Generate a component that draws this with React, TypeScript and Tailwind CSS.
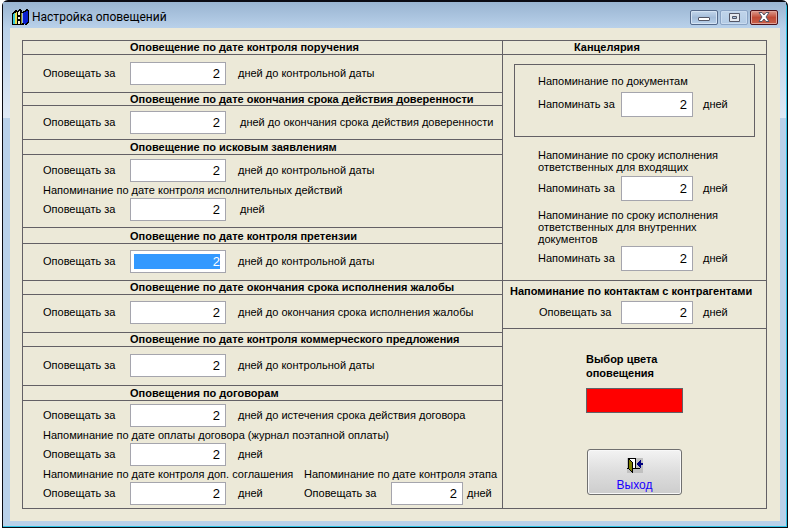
import React, { useState } from 'react';
import { clsx } from 'clsx';

interface DaysFieldProps {
  id: string;
  label: string;
  suffix: string;
  size?: 'wide' | 'small' | 'tall';
  selected?: boolean;
  labelClass?: string;
  suffixClass?: string;
}

function DaysField({
  id,
  label,
  suffix,
  size = 'wide',
  selected = false,
  labelClass = 'w-[87px]',
  suffixClass = 'ml-3'
}: DaysFieldProps) {
  const [value, setValue] = useState('2');

  return (
    <div className="flex items-center">
      <label htmlFor={id} className={clsx('shrink-0 whitespace-nowrap pb-px', labelClass)}>
        {label}
      </label>
      <span
        className={clsx(
          'flex shrink-0 border border-[#a5a5ad] bg-white py-[3px] pl-[3px] pr-[5px]',
          size === 'wide' && 'h-[23px] w-24',
          size === 'small' && 'h-[23px] w-[72px]',
          size === 'tall' && 'h-[25px] w-[72px]'
        )}
      >
        <input
          id={id}
          type="text"
          value={value}
          onChange={(e) => setValue(e.target.value)}
          className={clsx(
            'w-full min-w-0 text-right text-[13px] leading-4 outline-none',
            selected ? 'bg-[#3399ff] text-white' : 'bg-white text-black'
          )}
        />
      </span>
      <span className={clsx('whitespace-nowrap pb-px', suffixClass)}>{suffix}</span>
    </div>
  );
}

interface SectionProps {
  title: string;
  headClass: string;
  bodyClass: string;
  last?: boolean;
  children: React.ReactNode;
}

function Section({ title, headClass, bodyClass, last = false, children }: SectionProps) {
  return (
    <section>
      <h2 className={clsx('border-b border-[#636065] pl-[107px] leading-3 font-bold whitespace-nowrap', headClass)}>
        {title}
      </h2>
      <div className={clsx('pl-5', !last && 'border-b border-[#636065]', bodyClass)}>{children}</div>
    </section>
  );
}

function BooksIcon() {
  return (
    <svg width="17" height="17" viewBox="0 0 17 17" shapeRendering="crispEdges" aria-hidden="true">
      <path d="M0 4h1V3h1V2h1V1h2v1h1V1h1V0h2v1h1v2h1V2h2V1h1V0h2v1h1v13h-1v1h-1v1h-2v-1h-1v1H0z" fill="#000" />
      <path d="M1 5h1V4h1v11H1z" fill="#35c8d8" />
      <path d="M3 4h1V3h1v12H3z" fill="#e8e04a" />
      <path d="M6 3h1V2h1v4H6zM6 8h2v2H6zM6 12h2v3H6z" fill="#f2f2e0" />
      <path d="M9 4h1v11H9z" fill="#8a8a20" />
      <path d="M10 4h1v10h-1z" fill="#9ab8e8" />
      <path d="M11 4h1V3h2V2h2v11h-1v1h-1v1h-2v-1h-1z" fill="#0a1fd0" />
    </svg>
  );
}

function ExitIcon() {
  return (
    <svg width="16" height="15" viewBox="0 0 16 15" shapeRendering="crispEdges" aria-hidden="true">
      <path d="M0 0h16v15H0z" fill="#c0c0c0" />
      <path d="M1 0h8v10h4v1H0v-1h1z" fill="#000" />
      <path d="M3 1h5v9H3z" fill="#fff" />
      <path d="M1 0h1v1h1v1h1v1h1v1h1v11H5v-1H4v-1H3v-1H2v-1H1z" fill="#000" />
      <path d="M2 2h1v1h1v1h1v9H4v-1H3v-1H2z" fill="#808000" />
      <path d="M10 5h1V4h1V3h1V2h1v3h2v2h-2v3h-1V9h-1V8h-1V7h-1z" fill="#000080" />
    </svg>
  );
}

function TitleBar() {
  return (
    <header className="flex h-[26px] items-center justify-between bg-linear-to-b from-[#99b4d1] to-[#b9d1ea] pr-2 pl-[9px]">
      <div className="flex items-center gap-[3px] pt-1">
        <BooksIcon />
        <h1 className="font-['Roboto',sans-serif] text-xs leading-4">Настройка оповещений</h1>
      </div>
      <div className="flex gap-[2px] pt-1">
        <button
          type="button"
          aria-label="Свернуть"
          className="flex h-[15px] w-7 items-center justify-center rounded-xs border border-[#54698a] bg-linear-to-b from-[#c4d7ec] via-[#a3bcd9] to-[#b9d1ea] shadow-[inset_0_0_0_1px_#d5e4f4]"
        >
          <svg width="12" height="10" viewBox="0 0 12 10" aria-hidden="true">
            <rect x="0.5" y="5.5" width="11" height="3" rx="0.5" fill="#fff" stroke="#535666" />
          </svg>
        </button>
        <button
          type="button"
          aria-label="Развернуть"
          className="flex h-[15px] w-7 items-center justify-center rounded-xs border border-[#8aa3c4] bg-linear-to-b from-[#c0d4ea] to-[#b3cbe5] shadow-[inset_0_0_0_1px_#c9dbef]"
        >
          <svg width="11" height="9" viewBox="0 0 11 9" aria-hidden="true">
            <path d="M0.5 0.5h10v8h-10z" fill="#e4e8ee" stroke="#535666" />
            <path d="M3.5 3.5h4v2h-4z" fill="#a9c3e0" stroke="#535666" />
          </svg>
        </button>
        <button
          type="button"
          aria-label="Закрыть"
          className="flex h-[15px] w-7 items-center justify-center rounded-xs border border-[#4d1119] bg-linear-to-b from-[#dc9a8e] via-[#c04a35] to-[#c8604a] shadow-[inset_0_0_0_1px_#e0a398]"
        >
          <svg width="12" height="10" viewBox="0 0 12 10" aria-hidden="true">
            <path
              d="M1 0.5h3l2 2.5 2-2.5h3L8 5l3 4.5H8L6 7 4 9.5H1L4 5z"
              fill="#fff"
              stroke="#535666"
            />
          </svg>
        </button>
      </div>
    </header>
  );
}

function LeftColumn() {
  return (
    <div className="min-w-0 flex-1 border-r border-[#636065]">
      <Section title="Оповещение по дате контроля поручения" headClass="pb-px" bodyClass="py-[7px]">
        <DaysField id="order" label="Оповещать за" suffix="дней до контрольной даты" />
      </Section>
      <Section title="Оповещение по дате окончания срока действия доверенности" headClass="" bodyClass="py-[5px]">
        <DaysField id="warrant" label="Оповещать за" suffix="дней до окончания срока действия доверенности" suffixClass="ml-3.5" />
      </Section>
      <Section title="Оповещение по исковым заявлениям" headClass="py-px" bodyClass="pt-1 pb-1.5">
        <DaysField id="claim" label="Оповещать за" suffix="дней до контрольной даты" />
        <p className="leading-4">Напоминание по дате контроля исполнительных действий</p>
        <DaysField id="enforcement" label="Оповещать за" suffix="дней" suffixClass="ml-3.5" />
      </Section>
      <Section title="Оповещение по дате контроля претензии" headClass="pt-0.5 pb-px" bodyClass="pt-1.5 pb-[7px]">
        <DaysField id="pretension" label="Оповещать за" suffix="дней до контрольной даты" selected />
      </Section>
      <Section title="Оповещение по дате окончания срока исполнения жалобы" headClass="pb-px" bodyClass="pt-1.5 pb-2">
        <DaysField id="complaint" label="Оповещать за" suffix="дней до окончания срока исполнения жалобы" />
      </Section>
      <Section title="Оповещение по дате контроля коммерческого предложения" headClass="pb-px" bodyClass="pt-[7px] pb-2">
        <DaysField id="offer" label="Оповещать за" suffix="дней до контрольной даты" />
      </Section>
      <Section title="Оповещения по договорам" headClass="py-px" bodyClass="py-[3px]" last>
        <DaysField id="contract" label="Оповещать за" suffix="дней до истечения срока действия договора" />
        <p className="leading-4">Напоминание по дате оплаты договора (журнал поэтапной оплаты)</p>
        <DaysField id="payment" label="Оповещать за" suffix="дней" />
        <div className="flex">
          <div className="w-[261px]">
            <p className="leading-4 whitespace-nowrap">Напоминание по дате контроля доп. соглашения</p>
            <DaysField id="addendum" label="Оповещать за" suffix="дней" />
          </div>
          <div>
            <p className="leading-4 whitespace-nowrap">Напоминание по дате контроля этапа</p>
            <DaysField id="stage" label="Оповещать за" suffix="дней" size="small" suffixClass="ml-1" />
          </div>
        </div>
      </Section>
    </div>
  );
}

function RightColumn() {
  return (
    <div className="flex w-[263px] shrink-0 flex-col">
      <section className="border-b border-[#636065] pb-[9px]">
        <h2 className="border-b border-[#636065] pb-px pl-[71px] leading-3 font-bold">Канцелярия</h2>
        <div className="mx-[11px] mt-[9px] border border-[#636065] pt-2 pb-[19px] pl-[23px]">
          <p className="mb-[3px] leading-4">Напоминание по документам</p>
          <DaysField id="documents" label="Напоминать за" suffix="дней" size="tall" labelClass="w-[83px]" suffixClass="ml-2.5" />
        </div>
        <div className="mt-3 pl-[35px]">
          <p className="mb-[3px] leading-3">
            Напоминание по сроку исполнения
            <br />
            ответственных для входящих
          </p>
          <DaysField id="incoming" label="Напоминать за" suffix="дней" size="tall" labelClass="w-[83px]" suffixClass="ml-2.5" />
        </div>
        <div className="mt-2 pl-[35px]">
          <p className="mb-px leading-3">
            Напоминание по сроку исполнения
            <br />
            ответственных для внутренних
            <br />
            документов
          </p>
          <DaysField id="internal" label="Напоминать за" suffix="дней" size="tall" labelClass="w-[83px]" suffixClass="ml-2.5" />
        </div>
      </section>
      <section className="border-b border-[#636065] pt-0.5 pb-1">
        <h2 className="mb-0.5 pl-[7px] leading-4 font-bold whitespace-nowrap">Напоминание по контактам с контрагентами</h2>
        <div className="pl-9">
          <DaysField id="contacts" label="Оповещать за" suffix="дней" size="small" labelClass="w-[82px]" suffixClass="ml-2.5" />
        </div>
      </section>
      <section className="flex flex-col items-start pt-[23px] pl-[83px]">
        <h2 id="color-label" className="leading-[14px] font-bold">
          Выбор цвета
          <br />
          оповещения
        </h2>
        <button type="button" aria-labelledby="color-label" className="mt-2 h-[25px] w-[97px] border border-[#636065] bg-[#ff0000]" />
        <button
          type="button"
          className="mt-9 ml-px flex h-[46px] w-[95px] flex-col items-center rounded-[3px] border border-[#707070] bg-linear-to-b from-[#f3f3f3] from-0% via-[#dddddd] via-50% to-[#cdcdcd] to-100% pt-2 text-xs text-[#1a00ff] shadow-[inset_0_0_0_1px_#f8f8f8]"
        >
          <ExitIcon />
          <span className="mt-1 leading-4">Выход</span>
        </button>
      </section>
    </div>
  );
}

export default function App() {
  return (
    <div className="bg-white pr-px pl-0.5 font-['Liberation_Sans',Arial,sans-serif] text-[11px] text-black">
      <div className="rounded-t-md border border-t-2 border-[#0a0a12] bg-[#0a0a12]">
        <div className="rounded-t-[5px] border-r border-b border-[#2fc4e6] bg-[#b9d1ea]">
          <TitleBar />
          <div className="bg-linear-to-b from-[#b9d1ea] to-[#dfe9f5] to-[90px] bg-[length:100%_90px] bg-no-repeat pr-1.5 pb-[5px] pl-[7px]">
            <main className="bg-[#ece9d8] pt-3 pr-[13px] pb-3 pl-3">
              <div className="flex border border-[#636065]">
                <LeftColumn />
                <RightColumn />
              </div>
            </main>
          </div>
        </div>
      </div>
    </div>
  );
}
